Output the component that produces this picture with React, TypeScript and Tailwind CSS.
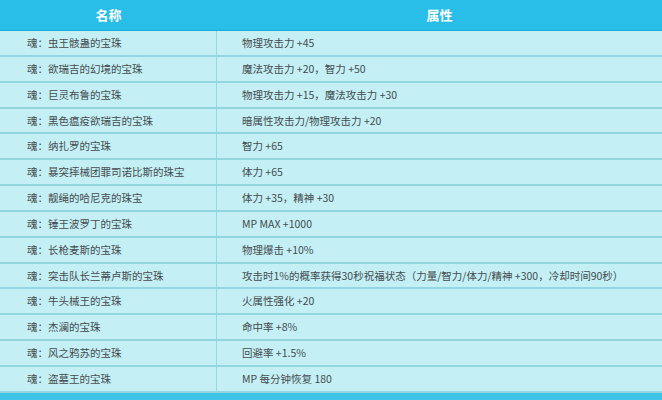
const rows: [string, string][] = [
  ['魂：虫王骸蛊的宝珠', '物理攻击力 +45'],
  ['魂：欲瑞吉的幻境的宝珠', '魔法攻击力 +20，智力 +50'],
  ['魂：巨灵布鲁的宝珠', '物理攻击力 +15，魔法攻击力 +30'],
  ['魂：黑色瘟疫欲瑞吉的宝珠', '暗属性攻击力/物理攻击力 +20'],
  ['魂：纳扎罗的宝珠', '智力 +65'],
  ['魂：暴突摔械团罪司诺比斯的珠宝', '体力 +65'],
  ['魂：靓绳的哈尼克的珠宝', '体力 +35，精神 +30'],
  ['魂：锤王波罗丁的宝珠', 'MP MAX +1000'],
  ['魂：长枪麦斯的宝珠', '物理爆击 +10%'],
  ['魂：突击队长兰蒂卢斯的宝珠', '攻击时1%的概率获得30秒祝福状态（力量/智力/体力/精神 +300，冷却时间90秒）'],
  ['魂：牛头械王的宝珠', '火属性强化 +20'],
  ['魂：杰澜的宝珠', '命中率 +8%'],
  ['魂：风之鸦苏的宝珠', '回避率 +1.5%'],
  ['魂：盗墓王的宝珠', 'MP 每分钟恢复 180'],
];

export default function App() {
  return (
    <div
      className="w-[662px] h-[400px] overflow-hidden bg-[#c3eff5]"
      style={{ fontFamily: '"Noto Sans CJK SC", "Noto Sans", sans-serif' }}
    >
      {/* header */}
      <div className="grid grid-cols-[217px_1fr] h-[31px] bg-[#29bee8] border-b border-[#1ea9d6] text-white text-[13px] font-bold">
        <div className="flex items-center justify-center">名称</div>
        <div className="flex items-center justify-center">属性</div>
      </div>

      {rows.map(([name, attr]) => (
        <div
          key={name}
          className="grid grid-cols-[217px_1fr] h-[25.85px] border-b-2 border-[#93d6df] text-[10.5px] text-[#454c4e]"
        >
          <div className="flex items-center pl-[27px] border-r border-[#9ad8e0] whitespace-nowrap">
            {name}
          </div>
          <div className="flex items-center pl-[25px] whitespace-nowrap">{attr}</div>
        </div>
      ))}

      <div className="h-[10px] bg-[#3cc3e6]" />
    </div>
  );
}
